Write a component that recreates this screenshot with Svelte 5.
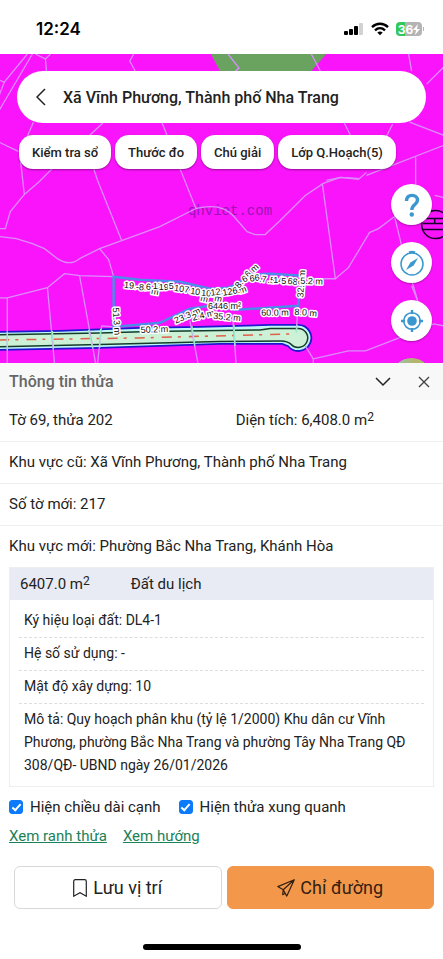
<script lang="ts">
  interface MapLabel {
    x: number;
    y: number;
    text: string;
    angle?: number;
  }

  let expanded = $state(true);
  let showEdges = $state(true);
  let showNeighbours = $state(true);

  const chips = ['Kiểm tra sổ', 'Thước đo', 'Chú giải', 'Lớp Q.Hoạch(5)'];

  const details = [
    'Ký hiệu loại đất: DL4-1',
    'Hệ số sử dụng: -',
    'Mật độ xây dựng: 10',
    'Mô tả: Quy hoạch phân khu (tỷ lệ 1/2000) Khu dân cư Vĩnh Phương, phường Bắc Nha Trang và phường Tây Nha Trang QĐ 308/QĐ- UBND ngày 26/01/2026',
  ];

  // Neighbouring parcel boundaries
  const boundaries = [
    'M28 0 5 28 0 41M0 26 5 28M33 0 0 56M36 0 46 5 47 17M46 5 51 0',
    'M134 0 130 7 136 18M34 68 28 82M104 68 88 83M162 68 168 83',
    'M0 88 19 97M21 105 25 140M53 114 40 127 25 140 11 157 6 174H0',
    'M94 114 98 126 122 186M180 114 196 154',
    'M0 182 17 184 33 189 45 194 58 204Q70 212 80 204L100 194 122 186 160 172 196 154Q221 148 233 161L247 177 255 180H265L280 166 305 141 323 129 340 123 358 124',
    'M322 129 335 224 348 213 369 178 378 174 394 162 401 191 417 246M335 224H300',
    'M100 194 109 205 114 222M0 243H8L48 233 65 219 80 221 114 222',
    'M8 243V308M48 233 55 308M80 221 96 308M102 271 98 308M102 271 114 272',
    'M190 266 198 308M233 267 236 308M298 251 296 276M305 291 313 304V308M313 304 348 296H365L396 284 433 269 443 271',
    'M228 0 239 14 225 26M311 0 320 17M408 0 411 17M443 13 426 30',
    'M344 69 351 83M392 70 386 82M409 68 443 81M443 91 366 121M415 103V130',
    'M326 126 340 123 358 125 366 118M434 141 443 143M411 231 417 246',
  ];

  const labels: MapLabel[] = [
    { x: 124, y: 233, text: '19.', angle: 6 },
    { x: 136, y: 235, text: '-8.', angle: 4 },
    { x: 146, y: 235, text: '6.', angle: 3 },
    { x: 151, y: 239, text: 'm', angle: 10 },
    { x: 153, y: 234, text: '11' },
    { x: 159, y: 235, text: '19' },
    { x: 169, y: 234, text: '5' },
    { x: 174, y: 236, text: '107.', angle: 8 },
    { x: 200, y: 246, text: 'm', angle: 12 },
    { x: 214, y: 246, text: 'm', angle: 12 },
    { x: 190, y: 239, text: '10.', angle: 8 },
    { x: 201, y: 241, text: '10.', angle: 4 },
    { x: 211, y: 241, text: '12.', angle: -8 },
    { x: 240, y: 239, text: 'm', angle: -18 },
    { x: 223, y: 241, text: '126.', angle: -10 },
    { x: 239, y: 234, text: '8.', angle: -50 },
    { x: 248, y: 223, text: '6 m', angle: -42 },
    { x: 244, y: 228, text: '6.', angle: -30 },
    { x: 250, y: 227, text: '66', angle: -8 },
    { x: 259, y: 227, text: '.7', angle: 4 },
    { x: 267, y: 228, text: '.5', angle: 6 },
    { x: 273, y: 228, text: '14' },
    { x: 281, y: 229, text: '5.' },
    { x: 287, y: 229, text: '68', angle: 8 },
    { x: 303, y: 243, text: '32.3 m', angle: -86 },
    { x: 300, y: 229, text: '5.2 m', angle: 2 },
    { x: 113, y: 253, text: '51.3 m', angle: 86 },
    { x: 141, y: 278, text: '50.2 m', angle: -2 },
    { x: 176, y: 269, text: '23.3 m', angle: -24 },
    { x: 193, y: 266, text: '2.4 m', angle: -14 },
    { x: 208, y: 254, text: '6446 m²' },
    { x: 213, y: 264, text: '35.2 m', angle: 5 },
    { x: 261, y: 261, text: '60.0 m', angle: -1 },
    { x: 294, y: 260, text: '8.0 m', angle: 4 },
  ];
</script>

<div class="screen">
  <header class="status">
    <span class="time">12:24</span>
    <div class="indicators">
      <svg width="20" height="14" viewBox="0 0 20 14" aria-hidden="true">
        <rect x="0" y="9" width="4" height="4" rx="1" />
        <rect x="5" y="7" width="4" height="6" rx="1" />
        <rect x="10" y="4" width="4" height="9" rx="1" />
        <rect x="15" y="1" width="4" height="12" rx="1" fill="#d2d2d2" />
      </svg>
      <svg width="18" height="14" viewBox="0 0 18 14" fill="none" stroke="#000" stroke-width="2.4" aria-hidden="true">
        <path d="M1 5.1c4.6-4.4 11.400-4.400 16 0M4 8.300c3-2.700 7-2.700 10 0" />
        <path d="M6.300 10.500c1.600-1.400 3.800-1.400 5.400 0L9 13.300z" fill="#000" stroke="none" />
      </svg>
      <div class="battery">
        <span>36</span>
        <svg width="7" height="11" viewBox="0 0 7 11" fill="#fff" aria-hidden="true">
          <path d="M5 0 0 6h3L2 11l5-6H4z" />
        </svg>
      </div>
    </div>
  </header>

  <section class="map" aria-label="Bản đồ">
    <svg class="canvas" viewBox="0 0 443 308" preserveAspectRatio="xMidYMid slice">
      <rect width="443" height="308" fill="#fa14fb" />
      <path d="M211 0H326L311 17H220z" fill="#6aa35f" />
      <g fill="none" stroke="#17002b" stroke-width="1.500">
        <circle cx="435" cy="170" r="14" />
        <path d="M423 164H443M422 169H443M422 175H443M434 164V169" />
      </g>
      <text class="watermark" x="188" y="160">qhviet.com</text>

      <!-- road with its rounded dead end -->
      <path d="M-4 277 60 276 140 273 200 272 270 270H298A13 13 0 1 1 288 291.300L282 289 220 289 100 293-4 295z" fill="#c0f7f5" stroke="#2018d0" stroke-width="1.800" />
      <path d="M-4 280 100 278 150 276.500 260 275 270 273.500H298A9.500 9.500 0 1 1 291 289.500Q287 286 281 286L220 286.500 100 289.500-4 292z" fill="#cdf1d7" stroke="#143c28" stroke-width="1.500" />
      <path d="M0 285 140 283 292 279" fill="none" stroke="#e0604a" stroke-width="1.500" stroke-dasharray="10 6 3 8" />

      <g fill="none" stroke="#dc8cff" stroke-width="1.300">
        {#each boundaries as d}
          <path {d} />
        {/each}
      </g>
      <g fill="none" stroke="#9ceccb" stroke-width="1.300">
        <path d="M8 277V295M53 276 54 294M89 275 93 293M101 274 100 293M192 271 195 291M234 270 235 291M297 270 296 278" />
      </g>

      <path d="M114 222 140 225 180 227 210 234 228 233 236 230 250 220 270 219 301 221 298 251 236 255 210 251 190 254 160 268 114 272z" fill="none" stroke="#4b8ce8" stroke-width="2.500" />

      {#if showEdges}
        {#each labels as l}
          <text class="length" transform={`translate(${l.x} ${l.y}) rotate(${l.angle ?? 0})`}>{l.text}</text>
        {/each}
      {/if}
    </svg>

    <div class="overlay">
      <div class="search">
        <button class="back" aria-label="Quay lại">
          <svg width="10" height="18" viewBox="0 0 10 18" fill="none" stroke="#222" stroke-width="1.500">
            <path d="M9 1 1 9l8 8" />
          </svg>
        </button>
        <h1>Xã Vĩnh Phương, Thành phố Nha Trang</h1>
      </div>
      <div class="chips">
        {#each chips as chip}
          <button class="chip">{chip}</button>
        {/each}
      </div>
      <div class="tools">
        <button class="tool" aria-label="Trợ giúp">
          <svg width="40" height="40" viewBox="0 0 40 40" fill="none" stroke="#3a97cf" stroke-width="3.400">
            <path d="M14.500 16c0-3.700 2.200-5.600 5.500-5.600s5.500 1.900 5.500 4.700c0 4.600-5.700 4.400-5.700 10" />
            <circle cx="19.800" cy="29.500" r="2.200" fill="#3a97cf" stroke="none" />
          </svg>
        </button>
        <button class="tool" aria-label="La bàn">
          <svg width="40" height="40" viewBox="0 0 40 40" fill="none" stroke="#3a97cf" stroke-width="1.500">
            <circle cx="20" cy="21" r="11" />
            <path d="M17 9.500c2-.8 4-.8 6 0" stroke-width="2.200" />
            <path d="M26 15 21.600 22.600 14 27l4.400-7.600z" fill="#3a97cf" stroke="none" />
          </svg>
        </button>
        <button class="tool" aria-label="Vị trí của tôi">
          <svg width="40" height="40" viewBox="0 0 40 40" fill="none" stroke="#3a97cf" stroke-width="1.600">
            <circle cx="20" cy="20" r="8.300" />
            <circle cx="20" cy="20" r="4.800" fill="#3a97cf" stroke="none" />
            <path d="M20 9v4M20 27v4M9 20h4M27 20h4" stroke-width="2.400" />
          </svg>
        </button>
        <button class="tool layers" aria-label="Lớp bản đồ"></button>
      </div>
    </div>
  </section>

  <section class="sheet">
    <div class="sheet-head">
      <h2>Thông tin thửa</h2>
      <button aria-label="Thu gọn" onclick={() => (expanded = !expanded)}>
        <svg width="16" height="10" viewBox="0 0 16 10" fill="none" stroke="#222" stroke-width="1.500">
          <path d="M1 1l7 7 7-7" />
        </svg>
      </button>
      <button aria-label="Đóng">
        <svg width="12" height="12" viewBox="0 0 12 12" fill="none" stroke="#444" stroke-width="1.400">
          <path d="M1 1l10 10M11 1 1 11" />
        </svg>
      </button>
    </div>

    {#if expanded}
      <div class="row split">
        <span>Tờ 69, thửa 202</span>
        <span>Diện tích: 6,408.0 m<sup>2</sup></span>
      </div>
      <div class="row">Khu vực cũ: Xã Vĩnh Phương, Thành phố Nha Trang</div>
      <div class="row">Số tờ mới: 217</div>
      <div class="row last">Khu vực mới: Phường Bắc Nha Trang, Khánh Hòa</div>

      <div class="zone">
        <div class="zone-head">
          <span>6407.0 m<sup>2</sup></span>
          <span>Đất du lịch</span>
        </div>
        <ul>
          {#each details as detail}
            <li>{detail}</li>
          {/each}
        </ul>
      </div>

      <div class="toggles">
        <label><input type="checkbox" bind:checked={showEdges} />Hiện chiều dài cạnh</label>
        <label><input type="checkbox" bind:checked={showNeighbours} />Hiện thửa xung quanh</label>
      </div>

      <nav class="links">
        <a href="#ranh-thua">Xem ranh thửa</a>
        <a href="#huong">Xem hướng</a>
      </nav>
    {/if}

    <div class="actions">
      <button class="save">
        <svg width="14" height="18" viewBox="0 0 14 18" fill="none" stroke="#222" stroke-width="1.200">
          <path d="M.7 17.200V2.500C.7 1.400 1.300.7 2.400.7h9.200c1.100 0 1.700.7 1.700 1.800v14.700L7 13.800z" />
        </svg>
        Lưu vị trí
      </button>
      <button class="go">
        <svg width="18" height="18" viewBox="0 0 18 18" fill="none" stroke="#332010" stroke-width="1.200" stroke-linejoin="round">
          <path d="M17.300.8.800 7.600l5.400 3.200 3.600 6.300zM17.300.8 6.200 10.800M6.200 10.800 5.700 15.700l2.500-1.500" />
        </svg>
        Chỉ đường
      </button>
    </div>
  </section>

  <div class="home-bar"></div>
</div>

<style>
  :global(body) {
    background: #fff;
  }

  .screen {
    display: flex;
    flex-direction: column;
    font-family: Roboto, 'Liberation Sans', sans-serif;
    font-size: 15px;
    color: #222;
  }

  button {
    font: inherit;
    color: inherit;
    border: 0;
    padding: 0;
    background: none;
    cursor: pointer;
  }

  svg {
    display: block;
  }

  .status {
    display: flex;
    justify-content: space-between;
    align-items: center;
    height: 54px;
    padding: 4px 21px 0 36px;
    box-sizing: border-box;
    color: #000;
  }

  .time {
    font-family: Inter, sans-serif;
    font-size: 17px;
    font-weight: 600;
  }

  .indicators {
    display: flex;
    align-items: center;
    gap: 7px;
  }

  .battery {
    position: relative;
    display: flex;
    align-items: center;
    justify-content: center;
    width: 26px;
    height: 14px;
    border-radius: 4px;
    background: linear-gradient(90deg, #34c759 36%, #b4b4b4 36%);
    color: #fff;
    font-family: Inter, sans-serif;
    font-size: 12px;
    font-weight: 700;
  }

  .battery::after {
    content: '';
    position: absolute;
    right: -2px;
    top: 5px;
    width: 1px;
    height: 4px;
    background: #b4b4b4;
  }

  .map {
    position: relative;
    height: 309px;
    overflow: hidden;
    background: #fa14fb;
  }

  .canvas {
    position: absolute;
    inset: 0;
    width: 100%;
    height: 100%;
  }

  .watermark {
    font-family: 'Liberation Mono', monospace;
    font-size: 14px;
    fill: #a012b4;
  }

  .length {
    font-family: 'Liberation Sans', sans-serif;
    font-size: 9px;
    fill: #111;
    stroke: #fff;
    stroke-width: 3px;
    stroke-linejoin: round;
    paint-order: stroke;
  }

  .overlay {
    position: relative;
    padding: 17px 11px 0 17px;
  }

  .search {
    display: flex;
    align-items: center;
    gap: 17px;
    height: 52px;
    margin-right: 6px;
    padding: 0 19px;
    border-radius: 26px;
    background: #fff;
  }

  h1 {
    margin: 0;
    font-size: 16px;
    font-weight: 500;
  }

  .chips {
    display: flex;
    gap: 4px;
    margin-top: 12px;
    padding-left: 2px;
  }

  .chip {
    height: 34px;
    padding: 0 13px;
    border-radius: 14px;
    background: #fff;
    box-shadow: 0 1px 2px rgb(0 0 0 / 40%);
    font-size: 13px;
    font-weight: 500;
    white-space: nowrap;
  }

  .tools {
    display: flex;
    flex-direction: column;
    align-items: flex-end;
    gap: 17px;
    margin-top: 15px;
  }

  .tool {
    display: grid;
    place-items: center;
    flex: none;
    width: 41px;
    height: 41px;
    border-radius: 50%;
    background: #fff;
    box-shadow: 0 1px 2px rgb(0 0 0 / 30%);
  }

  .layers {
    background: linear-gradient(90deg, #8fc7c0, #b5b46a 60%, #a8c08a);
  }

  .sheet-head {
    display: flex;
    align-items: center;
    height: 37px;
    padding: 0 13px 0 9px;
    background: #f8f8f8;
  }

  .sheet-head button + button {
    margin-left: 27px;
  }

  h2 {
    flex: 1;
    margin: 0;
    font-size: 16px;
    font-weight: 500;
    color: #666;
  }

  sup {
    font-size: 12px;
    line-height: 0;
    vertical-align: 4px;
  }

  .row {
    padding: 10px 9px;
    border-bottom: 1px solid #eee;
    line-height: 21px;
  }

  .split {
    display: grid;
    grid-template-columns: 8fr 7fr;
  }

  .row.last {
    border-bottom: 0;
  }

  .zone {
    margin: 0 9px;
    border: 1px solid #eee;
  }

  .zone-head {
    display: flex;
    gap: 41px;
    padding: 5px 10px;
    background: #e8ebf4;
    line-height: 22px;
  }

  .zone ul {
    margin: 0;
    padding: 4px 9px;
    list-style: none;
    font-size: 14px;
  }

  .zone li {
    padding: 5px;
    line-height: 23px;
  }

  .zone li + li {
    padding-top: 4px;
    border-top: 1px dashed #ddd;
  }

  .toggles {
    display: flex;
    gap: 18px;
    padding: 10px 9px 9px;
  }

  .toggles label {
    display: flex;
    align-items: center;
    gap: 7px;
    line-height: 20px;
  }

  .toggles input {
    appearance: none;
    width: 14px;
    height: 14px;
    margin: 0;
    border: 1px solid #999;
    border-radius: 3px;
  }

  .toggles input:checked {
    display: grid;
    place-items: center;
    border-color: #0b7bfb;
    background: #0b7bfb;
  }

  .toggles input:checked::after {
    content: '';
    width: 3px;
    height: 7px;
    margin-bottom: 2px;
    border: solid #fff;
    border-width: 0 2px 2px 0;
    transform: rotate(42deg);
  }

  .links {
    display: flex;
    gap: 16px;
    padding: 0 9px;
    line-height: 20px;
  }

  .links a {
    color: #1b8158;
  }

  .actions {
    display: flex;
    gap: 5px;
    padding: 20px 9px 0 14px;
  }

  .actions button {
    display: flex;
    flex: 1;
    align-items: center;
    justify-content: center;
    gap: 6px;
    height: 43px;
    border: 1px solid #d8d8d8;
    border-radius: 6px;
    font-size: 18px;
  }

  .actions .go {
    gap: 5px;
    border-color: #f3984b;
    background: #f3984b;
    color: #332010;
  }

  .home-bar {
    align-self: center;
    width: 158px;
    height: 6px;
    margin: 35px 0 9px;
    border-radius: 3px;
    background: #000;
  }
</style>
